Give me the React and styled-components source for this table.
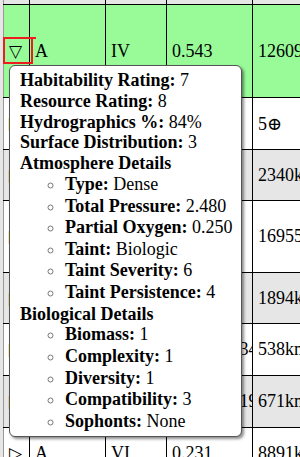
import React from "react";
import styled, { createGlobalStyle } from "styled-components";

const rows = [
    { arrow: "▷", cls: "A", orbit: "III", ecc: "0.118", size: "7410km", h: 52 },
    { arrow: "▽", cls: "A", orbit: "IV", ecc: "0.543", size: "12609km", h: 93, open: true },
    { arrow: "▷", cls: "B", orbit: "V", ecc: "0.072", size: "5⊕", h: 52 },
    { arrow: "▷", cls: "C", orbit: "V", ecc: "0.310", size: "2340km", h: 51 },
    { arrow: "▷", cls: "B", orbit: "VI", ecc: "0.027", size: "16955km", h: 72 },
    { arrow: "▷", cls: "D", orbit: "VII", ecc: "0.415", size: "1894km", h: 51 },
    { arrow: "▷", cls: "E", orbit: "VIII", ecc: "0.21833334", size: "538km", h: 52 },
    { arrow: "▷", cls: "E", orbit: "IX", ecc: "0.06177419", size: "671km", h: 52 },
    { arrow: "▷", cls: "A", orbit: "VI", ecc: "0.231", size: "8891km", h: 52 },
];

const atmosphere = [
    ["Type", "Dense"],
    ["Total Pressure", "2.480"],
    ["Partial Oxygen", "0.250"],
    ["Taint", "Biologic"],
    ["Taint Severity", "6"],
    ["Taint Persistence", "4"],
];

const biology = [
    ["Biomass", "1"],
    ["Complexity", "1"],
    ["Diversity", "1"],
    ["Compatibility", "3"],
    ["Sophonts", "None"],
];

const App = () => {
    return (
        <React.Fragment>
            <GlobalStyle />
            <Page>
                <Table>
                    <colgroup>
                        <col style={{ width: "26px" }} />
                        <col style={{ width: "76px" }} />
                        <col style={{ width: "61px" }} />
                        <col style={{ width: "86px" }} />
                        <col style={{ width: "120px" }} />
                    </colgroup>
                    <tbody>
                        <StubRow>
                            <StubCell />
                            <StubCell />
                            <StubCell />
                            <StubCell />
                            <StubCell />
                        </StubRow>
                        {rows.slice(1).map((r, i) => (
                            <Row key={i} $h={r.h} $open={r.open} $odd={i % 2 === 1}>
                                <Cell>
                                    {r.open ? <Toggle>{r.arrow}</Toggle> : <Arrow>{r.arrow}</Arrow>}
                                </Cell>
                                <Cell>{r.cls}</Cell>
                                <Cell>{r.orbit}</Cell>
                                <Cell>{r.ecc}</Cell>
                                <Cell>{r.size}</Cell>
                            </Row>
                        ))}
                    </tbody>
                </Table>

                <Tooltip>
                    <Line>
                        <b>Habitability Rating:</b> 7
                    </Line>
                    <Line>
                        <b>Resource Rating:</b> 8
                    </Line>
                    <Line>
                        <b>Hydrographics %:</b> 84%
                    </Line>
                    <Line>
                        <b>Surface Distribution:</b> 3
                    </Line>
                    <Line>
                        <b>Atmosphere Details</b>
                    </Line>
                    <SubList>
                        {atmosphere.map(([k, v]) => (
                            <li key={k}>
                                <b>{k}:</b> {v}
                            </li>
                        ))}
                    </SubList>
                    <Line>
                        <b>Biological Details</b>
                    </Line>
                    <SubList>
                        {biology.map(([k, v]) => (
                            <li key={k}>
                                <b>{k}:</b> {v}
                            </li>
                        ))}
                    </SubList>
                </Tooltip>
            </Page>
        </React.Fragment>
    );
};

const GlobalStyle = createGlobalStyle`
  html, body {
    margin: 0;
    padding: 0;
    overflow: hidden;
  }
  body {
    font-family: "Liberation Serif", "DejaVu Serif", "DejaVu Sans", serif;
    font-size: 18px;
    color: #000;
  }
`;

const Page = styled.div`
  position: relative;
  width: 300px;
  height: 457px;
  overflow: hidden;
  background-color: #e6e6e6;
  padding-left: 3px;
  box-sizing: border-box;
`;

const Table = styled.table`
  border-collapse: collapse;
  table-layout: fixed;
  width: 369px;
`;

const StubRow = styled.tr`
  height: 4px;
  background-color: #e6e6e6;
`;

const StubCell = styled.td`
  padding: 0;
  height: 4px;
  font-size: 0;
  line-height: 0;
  border-left: 1px solid #000;
  border-right: 1px solid #000;
  border-bottom: 1px solid #000;
  &:first-child {
    border-left: 1px solid #999;
  }
`;

const Row = styled.tr`
  height: ${(p) => p.$h}px;
  background-color: ${(p) => (p.$open ? "#98fb98" : p.$odd ? "#ffffff" : "#e6e6e6")};
`;

const Cell = styled.td`
  border: 1px solid #000;
  padding: 0 5px;
  vertical-align: middle;
  white-space: nowrap;
  overflow: hidden;
  &:first-child {
    border-left: 1px solid #999;
    overflow: visible;
  }
`;

const Arrow = styled.span`
  font-family: "DejaVu Sans", sans-serif;
  font-size: 17px;
`;

const Toggle = styled.span`
  position: relative;
  display: inline-block;
  font-family: "DejaVu Sans", sans-serif;
  font-size: 17px;
  line-height: 20px;
  &::after {
    content: "";
    position: absolute;
    left: -6px;
    right: -11px;
    top: -4px;
    bottom: -3px;
    border: 2px solid #ee1c1c;
  }
  &::before {
    content: "";
    position: absolute;
    right: -14px;
    top: -4px;
    width: 4px;
    height: 2px;
    background-color: #ee1c1c;
  }
`;

const Tooltip = styled.div`
  position: absolute;
  left: 9px;
  top: 65px;
  width: 212px;
  padding: 4px 9px 4px 10px;
  background-color: #fff;
  border: 1px solid #555;
  border-radius: 6px;
  box-shadow: 2px 2px 3px rgba(0, 0, 0, 0.45);
`;

const Line = styled.div`
  line-height: 20.8px;
  white-space: nowrap;
`;

const SubList = styled.ul`
  margin: 0;
  padding-left: 45px;
  list-style-type: circle;
  li {
    line-height: 21.6px;
    white-space: nowrap;
  }
  li::marker {
    color: #777;
  }
`;

export default App;
